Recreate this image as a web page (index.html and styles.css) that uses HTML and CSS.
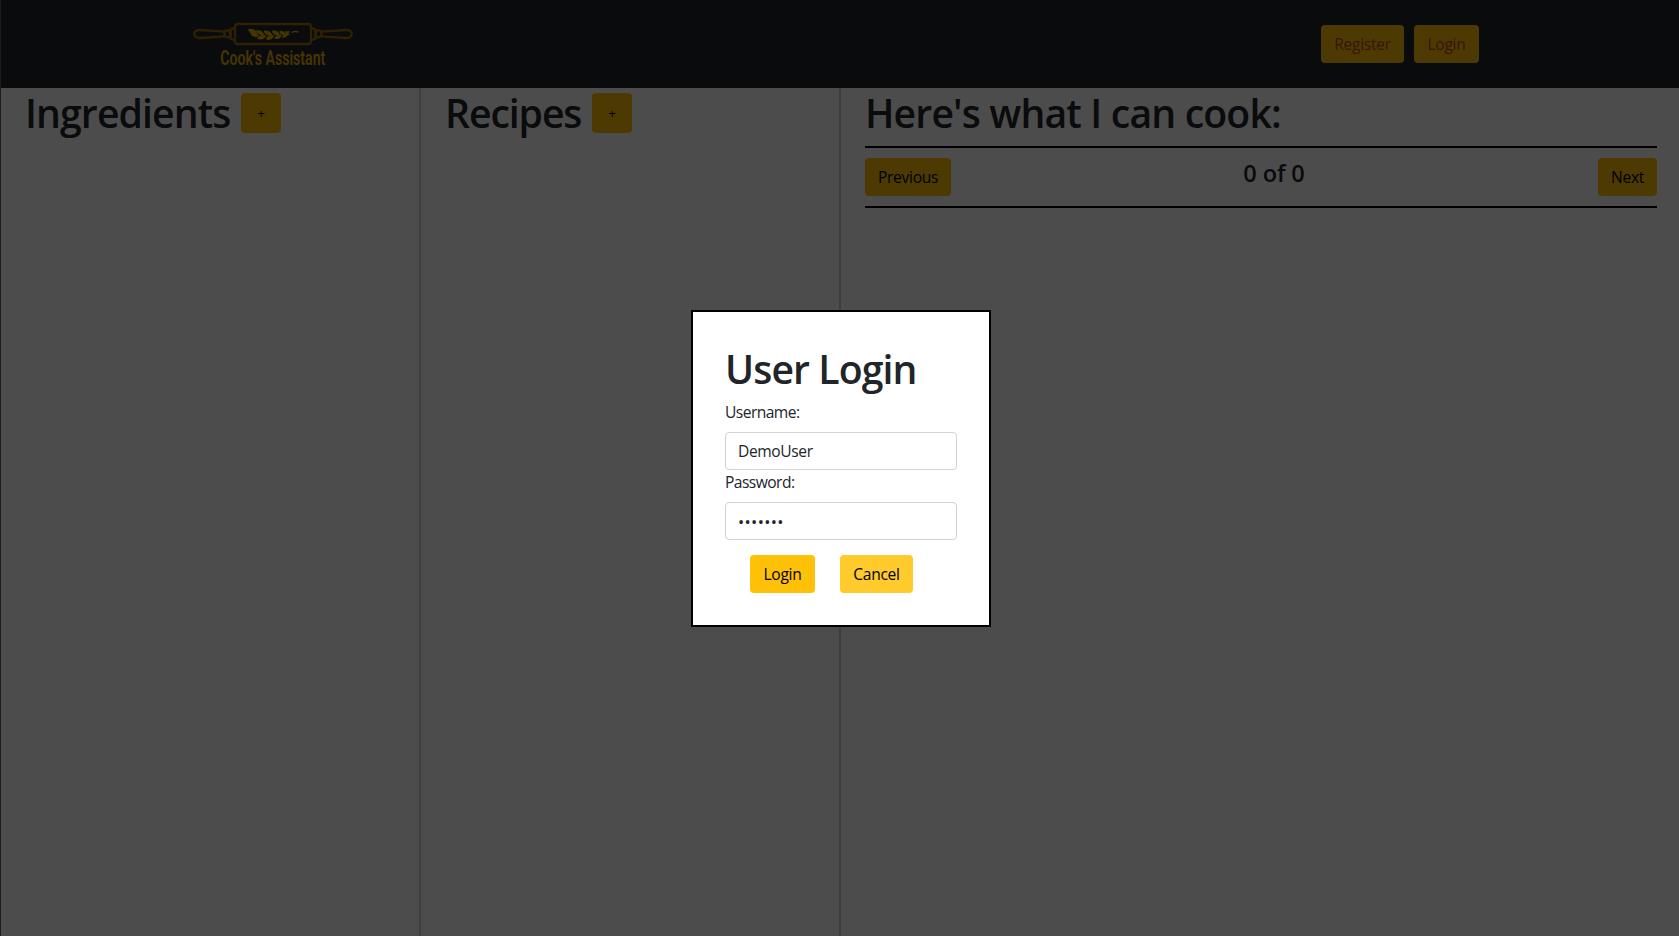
FILE: index.html
```html
<!DOCTYPE html>
<html lang="en">
<head>
<meta charset="utf-8">
<title>Cook's Assistant</title>
<link rel="stylesheet" href="styles.css">
</head>
<body>
<div class="app">
  <header class="navbar">
    <svg class="logo" viewBox="0 0 570 210" width="190" height="70" role="img" aria-label="Cook's Assistant">
      <g fill="none" stroke="#9c6c08" stroke-width="7" stroke-linejoin="round">
        <rect x="165" y="42" width="228" height="60" rx="8"/>
        <path d="M134 65 L62 60 C36 58 36 86 62 84 L134 79 Z"/>
        <path d="M134 63 L145 61 Q150 60 152 63 V81 Q150 84 145 82 L134 79 Z"/>
        <path d="M165 55 H158 Q150 58 150 64 V80 Q150 86 158 89 H165"/>
        <path d="M424 65 L496 60 C522 58 522 86 496 84 L424 79 Z"/>
        <path d="M424 63 L413 61 Q408 60 406 63 V81 Q408 84 413 82 L424 79 Z"/>
        <path d="M393 55 H400 Q408 58 408 64 V80 Q408 86 400 89 H393"/>
      </g>
      <g fill="#eab308">
        <path d="M204 57 Q229 53 232 75 Q209 76 204 57Z"/>
        <path d="M227 61 Q250 58 252 76 Q231 77 227 61Z"/>
        <path d="M251 62 Q273 60 277 76 Q254 79 251 62Z"/>
        <path d="M276 62 Q296 60 299 75 Q279 79 276 62Z"/>
        <path d="M298 63 Q314 60 318 74 Q300 78 298 63Z"/>
        <path d="M211 73 Q231 67 238 78 Q221 86 211 73Z"/>
        <path d="M231 86 Q238 71 259 76 Q252 94 231 86Z"/>
        <path d="M257 88 Q262 72 283 76 Q276 95 257 88Z"/>
        <path d="M283 86 Q287 72 305 75 Q301 91 283 86Z"/>
        <path d="M306 83 Q309 73 322 73 Q320 85 306 83Z"/>
        <path d="M315 64 L331 64 L324 71 L331 73 L320 78Z"/>
        <path d="M333 67 Q343 60 355 64 V68 Q343 65 333 69Z"/>
      </g>
      <text class="logo-text" x="121" y="165" textLength="315" lengthAdjust="spacingAndGlyphs">Cook's Assistant</text>
    </svg>
    <nav class="nav-actions">
      <button class="btn btn-nav register">Register</button>
      <button class="btn btn-nav login">Login</button>
    </nav>
  </header>
  <main class="columns">
    <section class="column">
      <div class="heading-row"><h1 class="t-ingredients">Ingredients</h1><button class="btn btn-add">+</button></div>
    </section>
    <section class="column">
      <div class="heading-row"><h1 class="t-recipes">Recipes</h1><button class="btn btn-add">+</button></div>
    </section>
    <section class="column results">
      <h1 class="t-results">Here's what I can cook:</h1>
      <div class="pager">
        <button class="btn previous">Previous</button>
        <h4 class="count">0 of 0</h4>
        <button class="btn next">Next</button>
      </div>
    </section>
  </main>
</div>
<div class="overlay">
  <form class="modal">
    <h1 class="t-modal">User Login</h1>
    <label for="user">Username:</label>
    <input id="user" class="field" type="text" value="DemoUser">
    <label for="pass">Password:</label>
    <div class="field dots" id="pass">•••••••</div>
    <div class="modal-actions">
      <button type="button" class="btn login">Login</button>
      <button type="button" class="btn cancel">Cancel</button>
    </div>
  </form>
</div>
</body>
</html>
```
FILE: styles.css
```css
* { box-sizing: border-box; }
body {
  margin: 0;
  height: 936px;
  overflow: hidden;
  background: #fff;
  color: #212529;
  font: 400 15.6px/24px "Open Sans", "Noto Sans", sans-serif;
  letter-spacing: -0.3px;
}
.app {
  height: 936px;
  display: flex;
  flex-direction: column;
  border-left: 1px solid #606060;
}
.navbar {
  flex: none;
  height: 88px;
  padding: 10px 200px 0 179px;
  background: #212529;
  display: flex;
  justify-content: space-between;
  align-items: flex-start;
}
.logo { display: block; }
.logo-text { font: 600 58px Roboto, sans-serif; fill: #eab308; letter-spacing: 0; }
.nav-actions { display: flex; gap: 10px; padding-top: 15px; }
.btn {
  height: 38px;
  padding: 0;
  border: 0;
  border-radius: 4px;
  background: #ffc107;
  color: #000;
  font: inherit;
  letter-spacing: inherit;
  text-align: center;
  white-space: nowrap;
}
.btn-nav { color: #c8442c; }
.register { width: 83px; }
.login { width: 65px; }
.cancel { width: 73px; background: #ffca2c; }
.previous { width: 86px; }
.next { width: 59px; }
.btn-add { width: 40px; height: 40px; font-size: 13px; }
.columns { flex: 1; display: grid; grid-template-columns: 420px 420px 1fr; }
.column { padding-left: 24px; border-right: 2px solid #d0d0d0; }
.results { padding-right: 22px; border-right: 0; }
h1 {
  margin: 0 0 -1px;
  font-size: 39.2px;
  line-height: 49px;
  font-weight: 600;
  white-space: nowrap;
}
.heading-row { display: flex; align-items: flex-start; }
.heading-row .btn-add { margin-top: 5px; }
.t-ingredients { width: 216px; letter-spacing: -0.9px; }
.t-recipes { width: 147px; letter-spacing: -1.1px; }
.t-results { letter-spacing: -0.85px; }
.t-modal { letter-spacing: -0.9px; margin-bottom: 7px; }
.pager {
  margin-top: 10px;
  height: 62px;
  padding: 10px 0;
  border-top: 2px solid #000;
  border-bottom: 2px solid #000;
  display: grid;
  grid-template-columns: 86px 1fr 59px;
}
.count { margin: 0 0 0 -1px; font-size: 23.5px; line-height: 30px; font-weight: 600; text-align: center; letter-spacing: -0.1px; }
.overlay {
  position: absolute;
  inset: 0;
  background: rgba(0, 0, 0, 0.7);
  display: flex;
  justify-content: center;
  align-items: flex-start;
  padding: 310px 0 0 3px;
}
.modal {
  width: 300px;
  height: 317px;
  padding: 32px;
  border: 2px solid #000;
  background: #fff;
}
label { display: block; margin-bottom: 8px; letter-spacing: -0.55px; }
.field {
  display: block;
  width: 232px;
  height: 38px;
  padding: 6px 12px;
  border: 1px solid #ced4da;
  border-radius: 4px;
  background: #fff;
  color: #212529;
  font: inherit;
  letter-spacing: -0.4px;
}
.dots { padding-top: 7px; font-size: 16.5px; letter-spacing: 0.35px; }
.modal-actions { display: flex; gap: 25px; padding: 15px 0 0 25px; }
```
